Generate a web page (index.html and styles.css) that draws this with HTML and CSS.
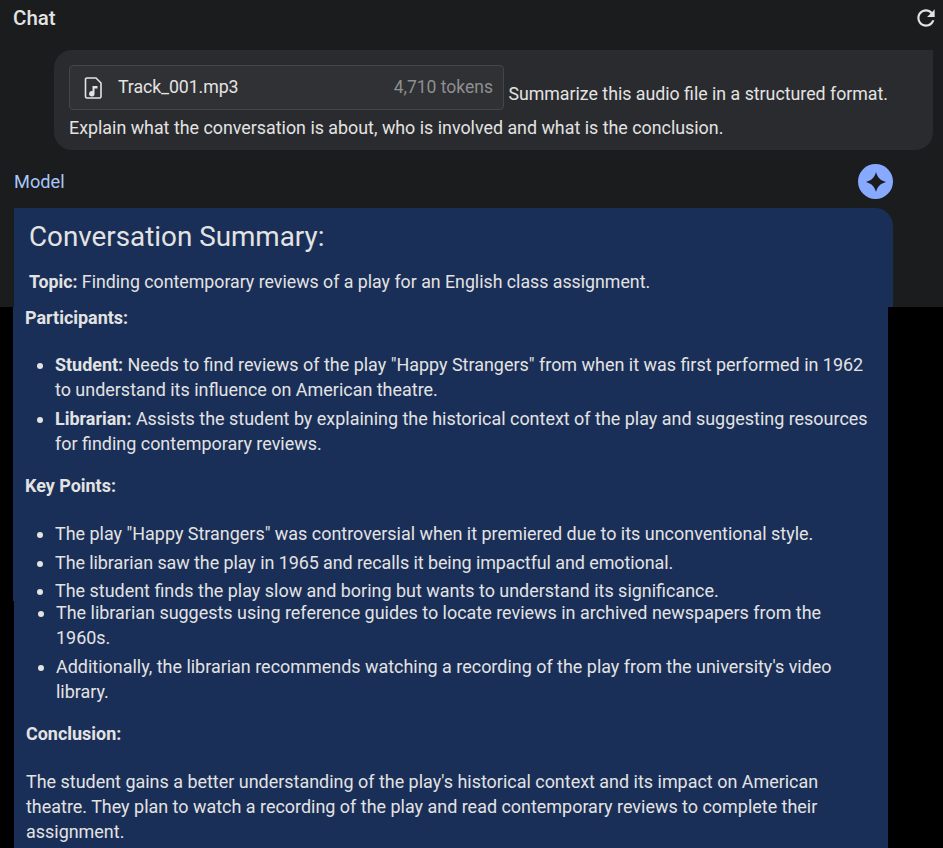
FILE: index.html
```html
<!DOCTYPE html>
<html lang="en">
<head>
    <meta charset="UTF-8">
    <meta name="viewport" content="width=device-width, initial-scale=1.0">
    <title>Chat</title>
    <link rel="stylesheet" href="styles.css">
</head>
<body>
    <!-- Top part of the capture: the chat panel -->
    <div class="chat-panel">
        <div class="chat-header">
            <div class="chat-title">Chat</div>
            <svg class="refresh-icon" width="26" height="26" viewBox="0 0 24 24">
                <path d="M17.65 6.35C16.2 4.9 14.21 4 12 4c-4.42 0-7.99 3.58-7.99 8s3.57 8 7.99 8c3.73 0 6.84-2.55 7.73-6h-2.08c-.82 2.33-3.04 4-5.650 4-3.310 0-6-2.690-6-6s2.690-6 6-6c1.660 0 3.140.690 4.220 1.780L13 11h7V4l-2.350 2.350z" fill="#e3e3e3"/>
            </svg>
        </div>

        <div class="user-turn">
            <div class="file-chip">
                <svg class="file-icon" width="18" height="22" viewBox="0 0 18 22">
                    <path d="M3 1h9l5 5v13.500a1.500 1.500 0 0 1-1.500 1.500h-12.500a1.500 1.500 0 0 1-1.500-1.500v-17a1.500 1.500 0 0 1 1.500-1.500z" fill="none" stroke="#e3e3e3" stroke-width="1.600"/>
                    <path d="M8.500 9h5v2.500h-3v5.300a2.700 2.700 0 1 1-2-2.600z" fill="#e3e3e3"/>
                </svg>
                <span class="file-name">Track_001.mp3</span>
                <span class="file-tokens">4,710 tokens</span>
            </div>
            <span class="prompt-first">Summarize this audio file in a structured format.</span>
            <div class="prompt-rest">Explain what the conversation is about, who is involved and what is the conclusion.</div>
        </div>

        <div class="model-row">
            <div class="model-label">Model</div>
            <div class="spark-badge">
                <svg width="22" height="22" viewBox="0 0 22 22">
                    <path d="M11 1C12.500 6.500 15.500 9.500 21 11C15.500 12.500 12.500 15.500 11 21C9.500 15.500 6.500 12.500 1 11C6.500 9.500 9.500 6.500 11 1Z" fill="#1b1c1e"/>
                </svg>
            </div>
        </div>

        <div class="summary-top">
            <h1 class="summary-title">Conversation Summary:</h1>
            <p class="topic"><b>Topic:</b> Finding contemporary reviews of a play for an English class assignment.</p>
        </div>
    </div>

    <!-- Second capture: rest of the answer on black -->
    <div class="summary-mid">
        <p class="section-head sec-participants">Participants:</p>
        <ul class="list list-participants">
            <li><b>Student:</b> Needs to find reviews of the play "Happy Strangers" from when it was first performed in 1962 to understand its influence on American theatre.</li>
            <li><b>Librarian:</b> Assists the student by explaining the historical context of the play and suggesting resources for finding contemporary reviews.</li>
        </ul>

        <p class="section-head sec-key">Key Points:</p>
        <ul class="list list-key">
            <li>The play "Happy Strangers" was controversial when it premiered due to its unconventional style.</li>
            <li class="snug">The librarian saw the play in 1965 and recalls it being impactful and emotional.</li>
            <li class="tight">The student finds the play slow and boring but wants to understand its significance.</li>
        </ul>
    </div>

    <!-- Third capture: sits one pixel further right -->
    <div class="summary-end">
        <ul class="list list-key-end">
            <li>The librarian suggests using reference guides to locate reviews in archived newspapers from the 1960s.</li>
            <li>Additionally, the librarian recommends watching a recording of the play from the university's video library.</li>
        </ul>

        <p class="section-head sec-conclusion">Conclusion:</p>
        <p class="conclusion">The student gains a better understanding of the play's historical context and its impact on American theatre. They plan to watch a recording of the play and read contemporary reviews to complete their assignment.</p>
    </div>
</body>
</html>
```

FILE: styles.css
```css
/* General Styling */
body {
    margin: 0;
    background-color: #000;
    color: #e3e3e3;
    font-family: Roboto, 'Liberation Sans', sans-serif;
    font-size: 17.95px;
    line-height: 25px;
    height: 848px;
    overflow: hidden;
}

b {
    font-weight: 700;
}

p {
    margin: 0;
}

/* Chat panel */
.chat-panel {
    height: 307px;
    background-color: #1b1c1e;
    font-size: 17.75px;
    overflow: hidden;
}

.chat-header {
    display: flex;
    justify-content: space-between;
    align-items: center;
    height: 36px;
    padding: 0 4px 0 13px;
}

.chat-title {
    font-size: 20.5px;
    font-weight: 500;
}

/* User turn */
.user-turn {
    margin: 14px 10px 0 54px;
    height: 100px;
    box-sizing: border-box;
    padding: 15px 15px 0;
    background-color: #2a2b2e;
    border-radius: 18px 0 18px 18px;
}

.file-chip {
    display: inline-flex;
    align-items: center;
    box-sizing: border-box;
    width: 435px;
    height: 45px;
    padding: 0 10px 0 14px;
    background-color: #303134;
    border: 1px solid #444548;
    border-radius: 4px;
    vertical-align: 1px;
}

.file-icon {
    margin-right: 16px;
}

.file-name {
    flex: 1;
    letter-spacing: -0.1px;
}

.file-tokens {
    color: #8e8f92;
    font-size: 17.5px;
}

.prompt-rest {
    margin-top: 5px;
    font-size: 17.85px;
}

/* Model row */
.model-row {
    display: flex;
    justify-content: space-between;
    align-items: center;
    height: 35px;
    margin: 14px 50px 0 14px;
}

.model-label {
    color: #a8c7fa;
    font-size: 18.2px;
}

.spark-badge {
    display: flex;
    justify-content: center;
    align-items: center;
    width: 35px;
    height: 35px;
    border-radius: 50%;
    background-color: #87a9ff;
}

/* Summary card */
.summary-top {
    margin: 9px 50px 0 14px;
    height: 99px;
    box-sizing: border-box;
    padding: 11px 15px 0;
    background-color: #1a2f58;
    border-radius: 0 18px 0 0;
}

.summary-title {
    margin: 0;
    font-size: 27.8px;
    line-height: 36px;
    font-weight: 400;
}

.topic {
    margin-top: 15px;
}

.summary-mid {
    box-sizing: border-box;
    height: 294px;
    margin: 0 55px 0 13px;
    padding-left: 12px;
    background-color: #1a2f58;
}

.summary-end {
    box-sizing: border-box;
    display: flow-root;
    height: 247px;
    margin: 0 55px 0 14px;
    padding-left: 12px;
    background-color: #1a2f58;
}

.section-head {
    font-weight: 700;
}

.sec-participants {
    line-height: 22px;
}

.list {
    margin: 0;
    padding: 0 15px 0 30px;
}

.list-participants {
    margin-top: 23px;
}

.list-participants li + li {
    margin-top: 4px;
}

.sec-key {
    margin-top: 17px;
}

.list-key {
    margin-top: 23px;
}

.list-key li + li {
    margin-top: 4px;
}

.list-key li.tight {
    margin-top: 3px;
}

.list-key li.snug {
    letter-spacing: -0.07px;
}

.list-key-end {
    margin-top: -1px;
}

.list-key-end li + li {
    margin-top: 4px;
}

.sec-conclusion {
    margin-top: 17px;
}

.conclusion {
    margin: 23px 40px 0 0;
}
```
